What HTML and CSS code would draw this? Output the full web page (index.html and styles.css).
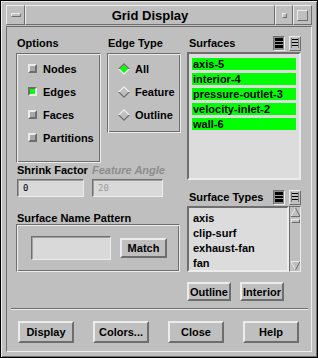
FILE: index.html
```html
<!DOCTYPE html>
<html lang="en">
<head>
    <meta charset="UTF-8">
    <title>Grid Display</title>
    <link rel="stylesheet" href="styles.css">
</head>
<body>
<div class="window">
    <div class="titlebar">
        <div class="tb-btn tb-menu"><span class="menu-bar"></span></div>
        <div class="tb-title">Grid Display</div>
        <div class="tb-btn tb-min"><span class="min-dot"></span></div>
        <div class="tb-btn tb-max"><span class="max-box"></span></div>
    </div>
    <div class="content">
        <div class="main">
            <div class="left">
                <div class="top-row">
                    <div class="col-options">
                        <div class="label label-top">Options</div>
                        <div class="group options-box">
                            <div class="row"><span class="check"></span>Nodes</div>
                            <div class="row"><span class="check on"></span>Edges</div>
                            <div class="row"><span class="check"></span>Faces</div>
                            <div class="row"><span class="check"></span>Partitions</div>
                        </div>
                    </div>
                    <div class="col-edges">
                        <div class="label label-top">Edge Type</div>
                        <div class="group edges-box">
                            <div class="row">
                                <svg class="radio" width="12" height="12" viewBox="0 0 12 12">
                                    <polygon points="6,0 0,6 2,6 6,2" fill="#6e6e6e"/>
                                    <polygon points="6,0 12,6 10,6 6,2" fill="#6e6e6e"/>
                                    <polygon points="0,6 6,12 6,10 2,6" fill="#ececec"/>
                                    <polygon points="12,6 6,12 6,10 10,6" fill="#ececec"/>
                                    <polygon points="6,2 10,6 6,10 2,6" fill="#00ff00"/>
                                </svg>All
                            </div>
                            <div class="row">
                                <svg class="radio" width="12" height="12" viewBox="0 0 12 12">
                                    <polygon points="6,0 0,6 2,6 6,2" fill="#ececec"/>
                                    <polygon points="6,0 12,6 10,6 6,2" fill="#ececec"/>
                                    <polygon points="0,6 6,12 6,10 2,6" fill="#6e6e6e"/>
                                    <polygon points="12,6 6,12 6,10 10,6" fill="#6e6e6e"/>
                                    <polygon points="6,2 10,6 6,10 2,6" fill="#bfbfbf"/>
                                </svg>Feature
                            </div>
                            <div class="row">
                                <svg class="radio" width="12" height="12" viewBox="0 0 12 12">
                                    <polygon points="6,0 0,6 2,6 6,2" fill="#ececec"/>
                                    <polygon points="6,0 12,6 10,6 6,2" fill="#ececec"/>
                                    <polygon points="0,6 6,12 6,10 2,6" fill="#6e6e6e"/>
                                    <polygon points="12,6 6,12 6,10 10,6" fill="#6e6e6e"/>
                                    <polygon points="6,2 10,6 6,10 2,6" fill="#bfbfbf"/>
                                </svg>Outline
                            </div>
                        </div>
                    </div>
                </div>
                <div class="fields-row">
                    <div class="field-col shrink">
                        <div class="label">Shrink Factor</div>
                        <div class="field">0</div>
                    </div>
                    <div class="field-col angle">
                        <div class="label disabled">Feature Angle</div>
                        <div class="field dim">20</div>
                    </div>
                </div>
                <div class="label label-pattern">Surface Name Pattern</div>
                <div class="group pattern-box">
                    <div class="field pattern-input"></div>
                    <div class="btn match">Match</div>
                </div>
            </div>
            <div class="right">
                <div class="list-head">
                    <div class="label">Surfaces</div>
                    <div class="sel-btns">
                        <div class="sel-btn all">
                            <svg width="8" height="10" viewBox="0 0 8 10"><rect x="0" y="0" width="8" height="10" fill="#000"/><rect x="0" y="3" width="8" height="1" fill="#9a9a9a"/><rect x="0" y="6" width="8" height="1" fill="#9a9a9a"/></svg>
                        </div>
                        <div class="sel-btn none">
                            <svg width="8" height="10" viewBox="0 0 8 10"><rect x="0" y="1" width="8" height="1" fill="#000"/><rect x="0" y="4" width="8" height="1" fill="#000"/><rect x="0" y="7" width="8" height="1" fill="#000"/><rect x="0" y="0" width="1" height="10" fill="#777"/><rect x="7" y="0" width="1" height="10" fill="#777"/></svg>
                        </div>
                    </div>
                </div>
                <div class="list surfaces">
                    <div class="item sel">axis-5</div>
                    <div class="item sel">interior-4</div>
                    <div class="item sel">pressure-outlet-3</div>
                    <div class="item sel">velocity-inlet-2</div>
                    <div class="item sel">wall-6</div>
                </div>
                <div class="list-head types-head">
                    <div class="label">Surface Types</div>
                    <div class="sel-btns">
                        <div class="sel-btn all">
                            <svg width="8" height="10" viewBox="0 0 8 10"><rect x="0" y="0" width="8" height="10" fill="#000"/><rect x="0" y="3" width="8" height="1" fill="#9a9a9a"/><rect x="0" y="6" width="8" height="1" fill="#9a9a9a"/></svg>
                        </div>
                        <div class="sel-btn none">
                            <svg width="8" height="10" viewBox="0 0 8 10"><rect x="0" y="1" width="8" height="1" fill="#000"/><rect x="0" y="4" width="8" height="1" fill="#000"/><rect x="0" y="7" width="8" height="1" fill="#000"/><rect x="0" y="0" width="1" height="10" fill="#777"/><rect x="7" y="0" width="1" height="10" fill="#777"/></svg>
                        </div>
                    </div>
                </div>
                <div class="types">
                    <div class="list types-list">
                        <div class="item">axis</div>
                        <div class="item">clip-surf</div>
                        <div class="item">exhaust-fan</div>
                        <div class="item">fan</div>
                    </div>
                    <div class="scrollbar">
                        <svg width="9" height="9" viewBox="0 0 9 9"><polygon points="4.5,0 0,8 9,8" fill="#bfbfbf"/><polyline points="0,8 4.5,0" stroke="#ececec" fill="none"/><polyline points="0,8.5 9,8.5 4.5,0" stroke="#6e6e6e" fill="none"/></svg>
                        <span class="thumb"></span>
                        <span class="spacer"></span>
                        <svg width="9" height="9" viewBox="0 0 9 9"><polygon points="0,1 9,1 4.5,9" fill="#bfbfbf"/><polyline points="0,0.5 9,0.5" stroke="#ececec" fill="none"/><polyline points="0,0.5 4.5,9" stroke="#ececec" fill="none"/><polyline points="9,0.5 4.5,9" stroke="#6e6e6e" fill="none"/></svg>
                    </div>
                </div>
                <div class="type-btns">
                    <div class="btn small">Outline</div>
                    <div class="btn small">Interior</div>
                </div>
            </div>
        </div>
        <div class="separator"></div>
        <div class="bottom">
            <div class="btn big">Display</div>
            <div class="btn big">Colors...</div>
            <div class="btn big">Close</div>
            <div class="btn big">Help</div>
        </div>
    </div>
</div>
</body>
</html>
```

FILE: styles.css
```css
* {
    margin: 0;
    padding: 0;
    box-sizing: border-box;
}
body {
    background: #bfbfbf;
    font-family: "Liberation Sans", Arial, sans-serif;
    font-weight: bold;
    font-size: 11px;
    color: #000;
}
.window {
    width: 318px;
    height: 358px;
    background: #bfbfbf;
    border: 1px solid #000;
    padding: 4px 5px 5px 5px;
    display: flex;
    flex-direction: column;
    box-shadow: inset 1px 1px #ececec, inset -1px -1px #6e6e6e;
}
/* title bar */
.titlebar {
    display: flex;
    height: 20px;
    margin-bottom: 1px;
}
.tb-btn, .tb-title {
    border: 1px solid;
    border-color: #ececec #6e6e6e #6e6e6e #ececec;
    display: flex;
    align-items: center;
    justify-content: center;
}
.tb-menu {
    width: 19px;
}
.menu-bar {
    width: 10px;
    height: 4px;
    border: 1px solid;
    border-color: #ececec #6e6e6e #6e6e6e #ececec;
}
.tb-title {
    flex: 1;
    font-size: 13px;
    padding-top: 1px;
}
.tb-min {
    width: 18px;
}
.min-dot {
    width: 5px;
    height: 5px;
    border: 1px solid;
    border-color: #ececec #6e6e6e #6e6e6e #ececec;
}
.tb-max {
    width: 19px;
}
.max-box {
    width: 11px;
    height: 11px;
    border: 1px solid;
    border-color: #ececec #6e6e6e #6e6e6e #ececec;
}
/* content */
.content {
    flex: 1;
    border: 1px solid;
    border-color: #6e6e6e #ececec #ececec #6e6e6e;
    display: flex;
    flex-direction: column;
}
.main {
    display: flex;
    gap: 7px;
    padding: 8px 10px 0 9px;
}
.left {
    width: 164px;
    display: flex;
    flex-direction: column;
}
.right {
    width: 114px;
    display: flex;
    flex-direction: column;
}
.label {
    line-height: 13px;
    height: 13px;
    white-space: nowrap;
}
.label-top {
    margin: 2px 0 3px 1px;
}
.disabled {
    color: #8c8c8c;
    font-style: italic;
}
.group {
    border: 1px solid;
    border-color: #6e6e6e #ececec #ececec #6e6e6e;
    box-shadow: inset 1px 1px #ececec, inset -1px -1px #6e6e6e;
}
.top-row {
    display: flex;
    gap: 6px;
}
.options-box {
    width: 85px;
    height: 110px;
    padding: 3px 0 0 11px;
}
.edges-box {
    width: 74px;
    height: 80px;
    padding: 3px 0 0 10px;
}
.row {
    height: 23px;
    display: flex;
    align-items: center;
    white-space: nowrap;
}
.check {
    width: 9px;
    height: 9px;
    margin-right: 6px;
    border: 2px solid;
    border-color: #ececec #6e6e6e #6e6e6e #ececec;
    background: #a8a8a8;
}
.check.on {
    border-color: #6e6e6e #ececec #ececec #6e6e6e;
    background: #00ff00;
}
.radio {
    margin-right: 5px;
}
.fields-row {
    display: flex;
    gap: 8px;
    margin-top: 1px;
}
.field-col .label {
    margin-bottom: 2px;
}
.shrink {
    width: 68px;
    padding-left: 1px;
}
.angle {
    width: 71px;
}
.field {
    height: 18px;
    background: #d9d9d9;
    border: 1px solid;
    border-color: #6e6e6e #ececec #ececec #6e6e6e;
    box-shadow: inset 1px 1px #a0a0a0;
    font-family: "DejaVu Sans Mono", monospace;
    font-weight: normal;
    font-size: 9px;
    line-height: 16px;
    padding-left: 5px;
}
.dim {
    color: #9a9a9a;
}
.label-pattern {
    margin: 15px 0 -1px 1px;
}
.pattern-box {
    height: 48px;
    display: flex;
    align-items: center;
    padding-left: 14px;
    gap: 9px;
}
.pattern-input {
    width: 80px;
    height: 24px;
}
.btn {
    border: 2px solid;
    border-color: #ececec #6e6e6e #6e6e6e #ececec;
    display: flex;
    align-items: center;
    justify-content: center;
    white-space: nowrap;
}
.match {
    width: 47px;
    height: 20px;
}
/* lists */
.list-head {
    display: flex;
    justify-content: space-between;
    align-items: center;
    height: 16px;
    margin: 0 0 1px 0;
}
.list-head .label {
    margin-left: 2px;
}
.sel-btns {
    display: flex;
    gap: 4px;
}
.sel-btn {
    width: 12px;
    height: 15px;
    border: 1px solid;
    display: flex;
    align-items: center;
    justify-content: center;
}
.sel-btn.all {
    border-color: #6e6e6e #ececec #ececec #6e6e6e;
    background: #8a8a8a;
}
.sel-btn.none {
    border-color: #ececec #6e6e6e #6e6e6e #ececec;
}
.list {
    background: #dcdcdc;
    border: 2px solid;
    border-color: #6e6e6e #ececec #ececec #6e6e6e;
}
.surfaces {
    height: 128px;
    padding: 4px 3px 0 3px;
}
.item {
    height: 12px;
    line-height: 12px;
    margin-bottom: 3px;
    padding-left: 1px;
    white-space: nowrap;
}
.item.sel {
    background: #00ff00;
}
.types-head {
    margin-top: 9px;
}
.types {
    display: flex;
    height: 66px;
}
.types-list {
    flex: 1;
    padding: 4px 3px 0 3px;
}
.scrollbar {
    width: 12px;
    background: #bfbfbf;
    border: 1px solid;
    border-color: #6e6e6e #ececec #ececec #6e6e6e;
    display: flex;
    flex-direction: column;
    align-items: center;
    padding: 1px 0;
}
.thumb {
    width: 9px;
    height: 4px;
    margin-top: 2px;
    border: 1px solid;
    border-color: #ececec #6e6e6e #6e6e6e #ececec;
}
.spacer {
    flex: 1;
}
.type-btns {
    display: flex;
    gap: 9px;
    margin-top: 10px;
}
.small {
    width: 44px;
    height: 19px;
}
.separator {
    margin: 7px 3px 0 4px;
    border-top: 1px solid #6e6e6e;
    border-bottom: 1px solid #ececec;
}
.bottom {
    display: flex;
    gap: 19px;
    padding: 11px 0 0 11px;
}
.big {
    width: 56px;
    height: 22px;
}
```
